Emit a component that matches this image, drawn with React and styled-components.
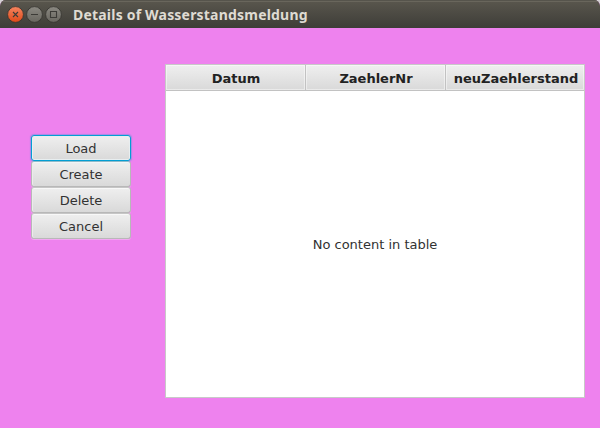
import React from "react";
import styled, { createGlobalStyle } from "styled-components";

const GlobalStyle = createGlobalStyle`
  * { box-sizing: border-box; }
  html, body { margin: 0; padding: 0; overflow: hidden; background: #d6d3d6; }
`;

const Window = styled.div`
  width: 600px;
  height: 428px;
  display: flex;
  flex-direction: column;
  overflow: hidden;
  background: #ee82ee;
  border-radius: 6px 6px 0 0;
  font-family: "DejaVu Sans", sans-serif;
  font-size: 13px;
  color: #323232;
`;

const TitleBar = styled.header`
  height: 28px;
  flex: none;
  display: flex;
  align-items: flex-start;
  padding: 5px 0 0 7px;
  background: linear-gradient(#5a574e, #3e3d38);
  box-shadow: inset 0 1px 0 #56544c, inset 0 2px 0 #69665c;
`;

const WindowControls = styled.div`
  display: flex;
  gap: 1px;
`;

const ControlIcon = styled.svg`
  display: block;
  width: 18px;
  height: 18px;
`;

const Title = styled.h1`
  margin: 0 0 0 10px;
  font: bold 14px/20px "Noto Sans", sans-serif;
  letter-spacing: 0.2px;
  color: #dfdbd2;
  white-space: nowrap;
`;

const Content = styled.main`
  flex: 1;
  display: flex;
  align-items: flex-start;
  padding: 36px 15px 30px 31px;
`;

const ButtonColumn = styled.nav`
  width: 100px;
  margin: 71px 34px 0 0;
  display: flex;
  flex-direction: column;
`;

const Button = styled.button`
  height: 26px;
  padding: 1px 0 0;
  border: 1px solid ${(p) => (p.$focused ? "#039ed3" : "#b8b8b8")};
  border-top-color: ${(p) => (p.$focused ? "#039ed3" : "#c6c6c6")};
  border-radius: 3px;
  background: linear-gradient(#efefef, #d9d9d9);
  box-shadow: ${(p) =>
    p.$focused
      ? "inset 0 0 0 1px #e8eef0, 0 0 1px 1px rgba(3, 158, 211, 0.3)"
      : "inset 0 1px 0 #f8f8f8, inset 1px 0 0 #ececec, 0 1px 0 rgba(255, 255, 255, 0.3)"};
  position: relative;
  z-index: ${(p) => (p.$focused ? 1 : 0)};
  font: inherit;
  color: inherit;
`;

const Table = styled.section`
  width: 420px;
  height: 334px;
  display: flex;
  flex-direction: column;
  border: 1px solid #c8c8c8;
  background: #fff;
`;

const HeaderRow = styled.div`
  height: 26px;
  flex: none;
  display: grid;
  grid-template-columns: 140px 140px 138px;
  border-bottom: 1px solid #c2c2c2;
`;

const HeaderCell = styled.div`
  display: flex;
  align-items: center;
  justify-content: center;
  padding: 1px 0 0 ${(p) => (p.$last ? "2px" : "1px")};
  border-right: ${(p) => (p.$last ? "none" : "1px solid #c2c2c2")};
  background: linear-gradient(#efefef, #d9d9d9);
  box-shadow: inset 0 0 0 1px rgba(255, 255, 255, 0.45);
  font-weight: bold;
  color: #222;
`;

const Placeholder = styled.div`
  flex: 1;
  display: flex;
  align-items: center;
  justify-content: center;
`;

const controls = [
  { name: "close", top: "#f58560", bottom: "#df4918", glyph: "M6 7l5 5M11 7l-5 5" },
  { name: "minimize", top: "#8b8982", bottom: "#68665f", glyph: "M5 9.5h7" },
  { name: "maximize", top: "#8b8982", bottom: "#68665f", glyph: "M5.5 6.5h6v6h-6z" },
];

function Control({ name, top, bottom, glyph }) {
  return (
    <ControlIcon viewBox="0 0 18 18" aria-label={name}>
      <defs>
        <linearGradient id={name} x1="0" y1="0" x2="0" y2="1">
          <stop offset="0" stopColor={top} />
          <stop offset="1" stopColor={bottom} />
        </linearGradient>
      </defs>
      <circle cx="8.5" cy="9.5" r="7.9" fill={`url(#${name})`} stroke="#35342f" strokeWidth="0.8" />
      <path d={glyph} fill="none" stroke="#3c3b37" strokeWidth="1.1" />
    </ControlIcon>
  );
}

export default function App() {
  const columns = ["Datum", "ZaehlerNr", "neuZaehlerstand"];
  return (
    <>
      <GlobalStyle />
      <Window>
        <TitleBar>
          <WindowControls>
            {controls.map((c) => (
              <Control key={c.name} {...c} />
            ))}
          </WindowControls>
          <Title>Details of Wasserstandsmeldung</Title>
        </TitleBar>
        <Content>
          <ButtonColumn>
            {["Load", "Create", "Delete", "Cancel"].map((label, i) => (
              <Button key={label} $focused={i === 0}>
                {label}
              </Button>
            ))}
          </ButtonColumn>
          <Table>
            <HeaderRow>
              {columns.map((label, i) => (
                <HeaderCell key={label} $last={i === columns.length - 1}>
                  {label}
                </HeaderCell>
              ))}
            </HeaderRow>
            <Placeholder>No content in table</Placeholder>
          </Table>
        </Content>
      </Window>
    </>
  );
}
